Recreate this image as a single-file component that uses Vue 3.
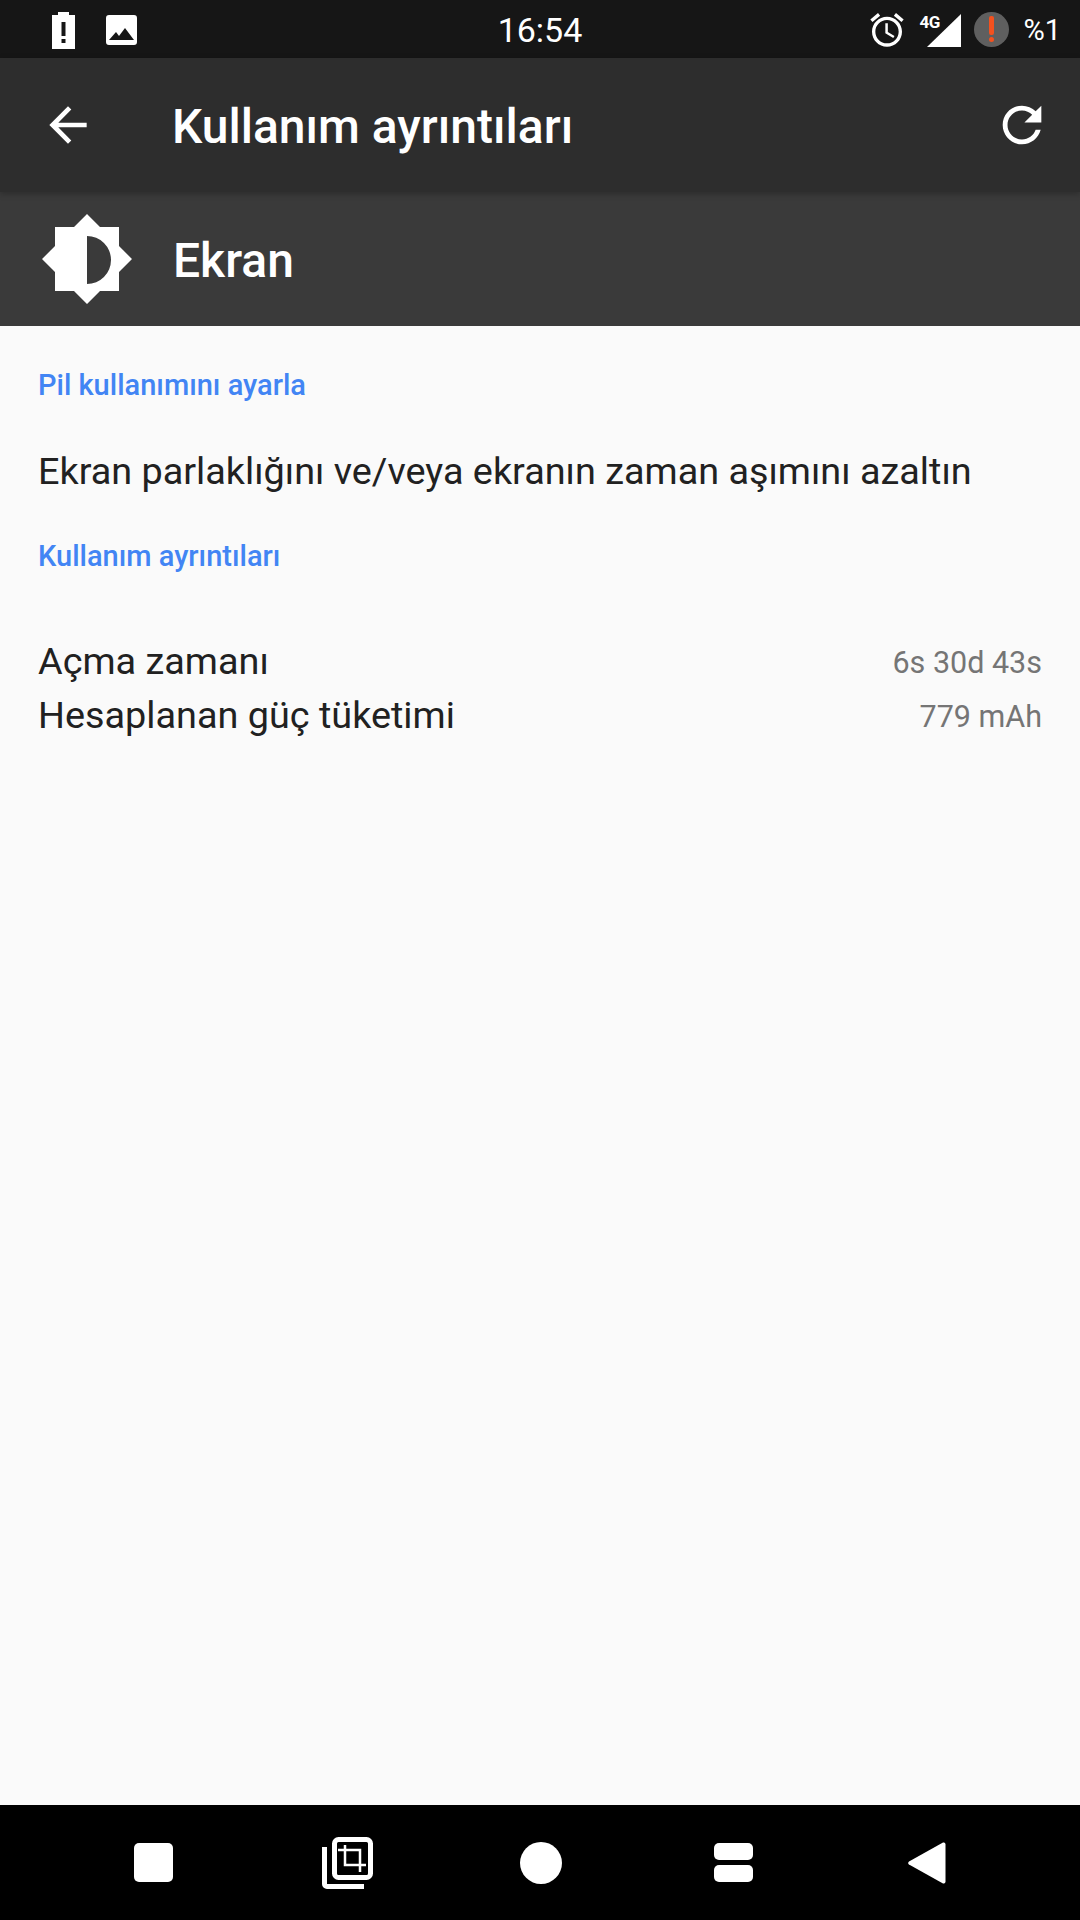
<template>
  <div class="screen">
    <!-- status bar -->
    <div class="status-bar">
      <div class="status-left">
        <svg class="ic-battery" viewBox="0 0 23 37">
          <path fill="#fff" fill-rule="evenodd" d="M6 0h11v3h6v34H0V3h6zM9.500 10v14h4V10zM9.500 27v4h4v-4z" />
        </svg>
        <svg class="ic-image" viewBox="0 0 31 30">
          <path fill="#fff" fill-rule="evenodd" d="M3 0h25a3 3 0 0 1 3 3v24a3 3 0 0 1-3 3H3a3 3 0 0 1-3-3V3a3 3 0 0 1 3-3zM3 25h25l-9-12-6 8-3-4z" />
        </svg>
      </div>
      <span class="time">16:54</span>
      <div class="status-right">
        <svg class="ic-alarm" viewBox="0 0 24 24">
          <path fill="#fff" d="M22 5.720l-4.600-3.860-1.290 1.530 4.600 3.860L22 5.720zM7.880 3.390L6.600 1.860 2 5.710l1.290 1.530 4.590-3.850zM12.500 8H11v6l4.750 2.850.75-1.230-4-2.370V8zM12 4c-4.970 0-9 4.030-9 9s4.030 9 9 9 9-4.030 9-9-4.030-9-9-9zm0 16c-3.870 0-7-3.130-7-7s3.130-7 7-7 7 3.130 7 7-3.130 7-7 7z" />
        </svg>
        <div class="signal">
          <svg class="ic-signal" viewBox="0 0 42 33">
            <path fill="#fff" d="M42 0v33H8z" />
          </svg>
          <span class="net">4G</span>
        </div>
        <div class="warn">
          <i class="warn-bar"></i>
          <i class="warn-dot"></i>
        </div>
        <span class="percent">%1</span>
      </div>
    </div>

    <!-- toolbar -->
    <header class="toolbar">
      <svg class="ic-back" viewBox="0 0 24 24">
        <path fill="#fff" d="M20 11H7.830l5.590-5.590L12 4l-8 8 8 8 1.410-1.410L7.830 13H20v-2z" />
      </svg>
      <h1 class="title">Kullanım ayrıntıları</h1>
      <svg class="ic-refresh" viewBox="0 0 24 24">
        <path fill="#fff" d="M17.650 6.350C16.200 4.900 14.210 4 12 4c-4.420 0-7.990 3.580-7.990 8s3.570 8 7.990 8c3.730 0 6.840-2.550 7.730-6h-2.080c-.82 2.330-3.040 4-5.650 4-3.310 0-6-2.690-6-6s2.690-6 6-6c1.660 0 3.140.69 4.220 1.780L13 11h7V4l-2.350 2.350z" />
      </svg>
    </header>

    <!-- app header -->
    <div class="app-band">
      <svg class="ic-sun" viewBox="0 0 90 90">
        <path fill="#fff" fill-rule="evenodd" d="M45 0l13 13h19v19l13 13-13 13v19H58L45 90 32 77H13V58L0 45l13-13V13h19zM45 22v48a24 24 0 0 0 0-48z" />
      </svg>
      <span class="app-name">Ekran</span>
    </div>

    <main class="content">
      <h2 class="section first">Pil kullanımını ayarla</h2>
      <p class="tip">Ekran parlaklığını ve/veya ekranın zaman aşımını azaltın</p>
      <h2 class="section">Kullanım ayrıntıları</h2>
      <div class="rows">
        <div v-for="row in rows" :key="row.label" class="row">
          <span class="row-label">{{ row.label }}</span>
          <span class="row-value">{{ row.value }}</span>
        </div>
      </div>
    </main>

    <!-- navigation bar -->
    <nav class="nav-bar">
      <div class="nav-slot"><i class="nav-square"></i></div>
      <div class="nav-slot">
        <svg class="ic-crop" viewBox="0 0 56 56">
          <rect x="14.500" y="4.500" width="36" height="38" rx="4" fill="none" stroke="#fff" stroke-width="5" />
          <path fill="none" stroke="#fff" stroke-width="5" d="M4.500 12v37a2.500 2.500 0 0 0 2.500 2.500h37" />
          <path fill="none" stroke="#fff" stroke-width="2.500" d="M18 15h22v22M25 10v20h21" />
        </svg>
      </div>
      <div class="nav-slot"><i class="nav-circle"></i></div>
      <div class="nav-slot">
        <div class="nav-stack"><i></i><i></i></div>
      </div>
      <div class="nav-slot">
        <svg class="ic-nav-back" viewBox="0 0 38 42">
          <path fill="#fff" d="M35 .6a2 2 0 0 1 2.500 1.900v37a2 2 0 0 1-2.500 1.900L1 22.600a2 2 0 0 1 0-3.200z" />
        </svg>
      </div>
    </nav>
  </div>
</template>

<script setup>
const rows = [
  { label: 'Açma zamanı', value: '6s 30d 43s' },
  { label: 'Hesaplanan güç tüketimi', value: '779 mAh' },
];
</script>

<style scoped>
.screen {
  height: 100vh;
  display: flex;
  flex-direction: column;
  background: #fafafa;
  font-family: Roboto, "Noto Sans", sans-serif;
  overflow: hidden;
}

.status-bar {
  height: 58px;
  flex-shrink: 0;
  display: grid;
  grid-template-columns: 1fr auto 1fr;
  align-items: center;
  background: #161616;
  color: #fff;
}
.status-left { display: flex; align-items: center; padding-left: 52px; }
.ic-battery { width: 23px; height: 37px; margin-top: 1px; }
.ic-image { width: 31px; height: 30px; margin-left: 31px; }
.time { font-size: 34px; line-height: 58px; margin-top: 1px; }
.status-right { display: flex; align-items: center; justify-content: flex-end; padding-right: 19px; }
.ic-alarm { width: 40px; height: 40px; margin-top: 1px; }
.signal { position: relative; width: 42px; height: 33px; margin-left: 12px; margin-top: 1px; }
.ic-signal { display: block; width: 42px; height: 33px; }
.net {
  position: absolute;
  left: 0;
  top: -2px;
  font-size: 17px;
  font-weight: 700;
  line-height: 20px;
  letter-spacing: -0.5px;
}
.warn {
  position: relative;
  width: 35px;
  height: 35px;
  margin-left: 13px;
  border-radius: 50%;
  background: #5f5f5f;
}
.warn-bar, .warn-dot { position: absolute; left: 15px; width: 5px; background: #f4511e; }
.warn-bar { top: 4px; height: 19px; border-radius: 2px; }
.warn-dot { top: 25px; height: 5px; border-radius: 50%; }
.percent { font-size: 29px; line-height: 58px; margin-left: 14px; }

.toolbar {
  position: relative;
  z-index: 1;
  height: 134px;
  flex-shrink: 0;
  display: flex;
  align-items: center;
  padding: 0 10px 0 40px;
  background: #2d2d2d;
  box-shadow: 0 2px 6px rgba(0, 0, 0, 0.25);
}
.ic-back { width: 56px; height: 56px; }
.title {
  flex: 1;
  margin: 2px 0 0 76px;
  font-size: 48px;
  font-weight: 500;
  color: #fff;
}
.ic-refresh { width: 58px; height: 58px; margin-right: 19px; }

.app-band {
  height: 134px;
  flex-shrink: 0;
  display: flex;
  align-items: center;
  padding-left: 42px;
  background: #3a3a3a;
}
.ic-sun { width: 90px; height: 90px; }
.app-name { margin: 2px 0 0 41px; font-size: 48px; font-weight: 500; color: #fff; }

.content { flex: 1; padding: 0 38px; }
.section {
  margin: 40px 0 0;
  font-size: 29px;
  font-weight: 500;
  line-height: 40px;
  color: #4285f4;
}
.section.first { margin-top: 39px; }
.tip { margin: 41px 0 0; font-size: 37.800px; line-height: 50px; color: #212121; }
.rows { margin-top: 59px; }
.row { display: flex; justify-content: space-between; align-items: center; height: 54px; }
.row-label { font-size: 37.800px; margin-bottom: 2px; color: #212121; }
.row-value { font-size: 30.500px; color: #757575; }

.nav-bar {
  height: 115px;
  flex-shrink: 0;
  display: flex;
  justify-content: center;
  background: #000;
}
.nav-slot { width: 193px; display: flex; align-items: center; justify-content: center; }
.nav-square { width: 39px; height: 39px; margin-right: 2px; border-radius: 5px; background: #fff; }
.ic-crop { width: 56px; height: 56px; margin-left: 2px; }
.nav-circle { width: 42px; height: 42px; margin-left: 2px; border-radius: 50%; background: #fff; }
.nav-stack { display: flex; flex-direction: column; gap: 5px; width: 39px; }
.nav-stack i { height: 17px; border-radius: 5px; background: #fff; }
.ic-nav-back { width: 38px; height: 42px; margin-left: 2px; }
</style>
